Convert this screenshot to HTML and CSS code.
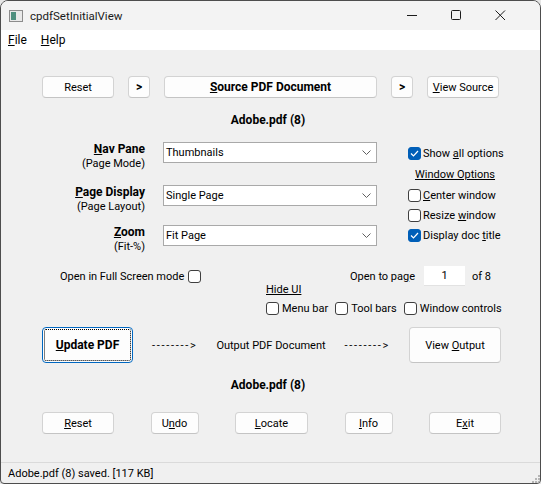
FILE: index.html
```html
<!DOCTYPE html>
<html lang="en">
<head>
    <meta charset="UTF-8">
    <title>cpdfSetInitialView</title>
    <link rel="stylesheet" href="styles.css">
</head>
<body>
    <div class="window">
        <!-- Title bar -->
        <div class="titlebar">
            <svg class="app-icon" width="14" height="12" viewBox="0 0 14 12">
                <rect x="0.5" y="0.5" width="13" height="11" fill="#e9e9e9" stroke="#8c8c8c"/>
                <rect x="2" y="2" width="5" height="8" fill="#4f8f7f"/>
            </svg>
            <span class="title">cpdfSetInitialView</span>
            <div class="controls">
                <div class="ctrl">
                    <svg width="11" height="11" viewBox="0 0 11 11"><line x1="0" y1="5.5" x2="10" y2="5.5" stroke="#1b1b1b"/></svg>
                </div>
                <div class="ctrl">
                    <svg width="11" height="11" viewBox="0 0 11 11"><rect x="0.5" y="0.5" width="9" height="9" rx="1" fill="none" stroke="#1b1b1b"/></svg>
                </div>
                <div class="ctrl">
                    <svg width="11" height="11" viewBox="0 0 11 11"><path d="M0.5 0.5 L10 10 M10 0.5 L0.5 10" stroke="#1b1b1b"/></svg>
                </div>
            </div>
        </div>

        <!-- Menu -->
        <div class="menubar">
            <span class="menu-item"><u>F</u>ile</span>
            <span class="menu-item"><u>H</u>elp</span>
        </div>

        <div class="content">
            <div class="top-row">
                <button class="btn">Reset</button>
                <button class="btn bold">&gt;</button>
                <button class="btn bold"><u>S</u>ource PDF Document</button>
                <button class="btn bold">&gt;</button>
                <button class="btn"><u>V</u>iew Source</button>
            </div>

            <div class="filename">Adobe.pdf (8)</div>

            <div class="options">
                <div class="fields">
                    <div class="field-label"><b><u>N</u>av Pane</b><br>(Page Mode)</div>
                    <div class="combo">Thumbnails
                        <svg width="9" height="5" viewBox="0 0 9 5"><polyline points="0.5,0.5 4.5,4.5 8.5,0.5" fill="none" stroke="#606060"/></svg>
                    </div>
                    <div class="field-label"><b><u>P</u>age Display</b><br>(Page Layout)</div>
                    <div class="combo">Single Page
                        <svg width="9" height="5" viewBox="0 0 9 5"><polyline points="0.5,0.5 4.5,4.5 8.5,0.5" fill="none" stroke="#606060"/></svg>
                    </div>
                    <div class="field-label"><b><u>Z</u>oom</b><br>(Fit-%)</div>
                    <div class="combo">Fit Page
                        <svg width="9" height="5" viewBox="0 0 9 5"><polyline points="0.5,0.5 4.5,4.5 8.5,0.5" fill="none" stroke="#606060"/></svg>
                    </div>
                </div>

                <div class="checks">
                    <div class="check-row">
                        <span class="cb on"><svg width="11" height="11" viewBox="0 0 11 11"><polyline points="2,5.5 4.5,8 9,3" fill="none" stroke="#fff" stroke-width="1.2"/></svg></span>
                        <span>Show <u>a</u>ll options</span>
                    </div>
                    <div class="group-title">Window Options</div>
                    <div class="check-row"><span class="cb"></span><span><u>C</u>enter window</span></div>
                    <div class="check-row"><span class="cb"></span><span>Resize <u>w</u>indow</span></div>
                    <div class="check-row">
                        <span class="cb on"><svg width="11" height="11" viewBox="0 0 11 11"><polyline points="2,5.5 4.5,8 9,3" fill="none" stroke="#fff" stroke-width="1.2"/></svg></span>
                        <span>Display doc <u>t</u>itle</span>
                    </div>
                </div>
            </div>

            <div class="misc">
                <div class="fullscreen"><span>Open in Full Screen mode</span><span class="cb"></span></div>
                <div class="hide-block">
                    <div class="page-row">
                        <span class="page-label">Open to pa<u>g</u>e</span>
                        <span class="page-input">1</span>
                        <span class="page-total">of 8</span>
                    </div>
                    <div class="hide-ui">Hide UI</div>
                    <div class="ui-checks">
                        <span class="ui-check"><span class="cb"></span>Menu bar</span>
                        <span class="ui-check"><span class="cb"></span>Tool bars</span>
                        <span class="ui-check"><span class="cb"></span>Window controls</span>
                    </div>
                </div>
            </div>

            <div class="update-row">
                <button class="btn big focus bold"><u>U</u>pdate PDF</button>
                <span class="arrow dash">--------&gt;</span>
                <span class="arrow">Output PDF Document</span>
                <span class="arrow dash">--------&gt;</span>
                <button class="btn big">View <u>O</u>utput</button>
            </div>

            <div class="filename second">Adobe.pdf (8)</div>

            <div class="bottom-row">
                <button class="btn w72"><u>R</u>eset</button>
                <button class="btn w48">U<u>n</u>do</button>
                <button class="btn w73"><u>L</u>ocate</button>
                <button class="btn w48"><u>I</u>nfo</button>
                <button class="btn w72">E<u>x</u>it</button>
            </div>
        </div>

        <div class="statusbar">
            <span>Adobe.pdf (8) saved. [117 KB]</span>
            <svg class="grip" width="10" height="10" viewBox="0 0 10 10" fill="#b5b5b5">
                <rect x="8" y="2" width="2" height="2"/>
                <rect x="5" y="5" width="2" height="2"/>
                <rect x="8" y="5" width="2" height="2"/>
                <rect x="2" y="8" width="2" height="2"/>
                <rect x="5" y="8" width="2" height="2"/>
                <rect x="8" y="8" width="2" height="2"/>
            </svg>
        </div>
    </div>
</body>
</html>
```

FILE: styles.css
```css
body {
    margin: 0;
    background-color: #e6e6e6;
    font-family: Roboto, 'Liberation Sans', sans-serif;
    font-size: 11px;
    color: #000;
}
.window {
    width: 541px;
    height: 484px;
    box-sizing: border-box;
    border: 1px solid #4d4d4d;
    border-radius: 8px 8px 4px 4px;
    background-color: #f0f0f0;
    overflow: hidden;
    display: flex;
    flex-direction: column;
}
.titlebar {
    height: 29px;
    display: flex;
    align-items: center;
    background-color: #f3f3f3;
    padding-left: 8px;
}
.app-icon {
    margin-right: 7px;
}
.title {
    font-size: 11.5px;
    color: #1a1a1a;
}
.controls {
    margin-left: auto;
    display: flex;
    padding-right: 18px;
}
.ctrl {
    width: 44px;
    height: 29px;
    display: flex;
    align-items: center;
    justify-content: center;
}
.menubar {
    height: 20px;
    background-color: #fff;
    display: flex;
    align-items: center;
}
.menu-item {
    padding: 0 7px;
    font-size: 12px;
}
.content {
    flex: 1;
}
.btn {
    height: 22px;
    box-sizing: border-box;
    border: 1px solid #d3d3d3;
    border-bottom-color: #c4c4c4;
    border-radius: 4px;
    background-color: #fdfdfd;
    font-family: inherit;
    font-size: 11px;
    color: #000;
    padding: 0;
}
.bold {
    font-weight: bold;
    font-size: 12px;
}
.top-row {
    display: grid;
    grid-template-columns: 72px 22px 213px 22px 72px;
    column-gap: 14px;
    margin: 26px 0 0 41px;
}
.filename {
    margin-top: 14px;
    line-height: 16px;
    text-align: center;
    font-weight: bold;
    font-size: 12px;
    padding-right: 5px;
}
.options {
    display: flex;
    margin-top: 14px;
    padding-left: 41px;
}
.fields {
    display: grid;
    grid-template-columns: 103px 214px;
    grid-template-rows: 43px 40px auto;
    column-gap: 18px;
}
.field-label {
    text-align: right;
    line-height: 14px;
}
.field-label b {
    font-size: 12px;
}
.combo {
    height: 21px;
    box-sizing: border-box;
    border: 1px solid #a9a9a9;
    background-color: #fff;
    display: flex;
    align-items: center;
    justify-content: space-between;
    padding: 0 5px 0 2px;
}
.checks {
    margin-left: 31px;
    margin-top: 1px;
}
.check-row {
    display: flex;
    align-items: center;
    height: 20px;
}
.group-title {
    height: 20px;
    line-height: 20px;
    margin-top: 2px;
    padding-left: 7px;
    text-decoration: underline;
}
.cb {
    width: 13px;
    height: 13px;
    box-sizing: border-box;
    border: 1px solid #3f3f3f;
    border-radius: 3px;
    background-color: #fff;
    margin-right: 2px;
    flex: none;
    display: inline-flex;
    align-items: center;
    justify-content: center;
}
.cb.on {
    background-color: #005fb8;
    border-color: #005fb8;
}
.misc {
    display: grid;
    grid-template-columns: 206px auto;
    padding-left: 59px;
    margin-top: 14px;
}
.fullscreen {
    display: flex;
    align-items: center;
    height: 16px;
}
.fullscreen .cb {
    margin-left: 4px;
}
.page-row {
    display: flex;
    align-items: center;
    height: 16px;
    padding-left: 84px;
}
.page-label {
    width: 74px;
}
.page-input {
    width: 41px;
    height: 20px;
    box-sizing: border-box;
    background-color: #fff;
    border-bottom: 1px solid #e2e2e2;
    text-align: center;
    line-height: 19px;
    flex: none;
}
.page-total {
    margin-left: 7px;
}
.hide-ui {
    line-height: 12px;
    text-decoration: underline;
}
.ui-checks {
    display: flex;
    align-items: center;
    height: 20px;
    margin-top: 2px;
}
.ui-check {
    display: flex;
    align-items: center;
    margin-right: 7px;
}
.ui-check .cb {
    margin-right: 3px;
}
.update-row {
    display: grid;
    grid-template-columns: 91px 1fr auto 1fr 92px;
    align-items: center;
    width: 459px;
    margin: 9px 0 0 41px;
}
.arrow {
    text-align: center;
}
.dash {
    letter-spacing: 1.7px;
}
.btn.big {
    height: 36px;
}
.btn.focus {
    border-color: #0067c0;
    outline: 1px dotted #000;
    outline-offset: -3px;
}
.filename.second {
    margin-top: 14px;
}
.bottom-row {
    display: flex;
    justify-content: space-between;
    width: 459px;
    margin: 19px 0 0 41px;
}
.w72 { width: 72px; }
.w73 { width: 73px; }
.w48 { width: 48px; }
.statusbar {
    height: 20px;
    border-top: 1px solid #dadada;
    display: flex;
    align-items: center;
    padding-left: 7px;
}
.grip {
    margin-left: auto;
    align-self: flex-end;
}
```
